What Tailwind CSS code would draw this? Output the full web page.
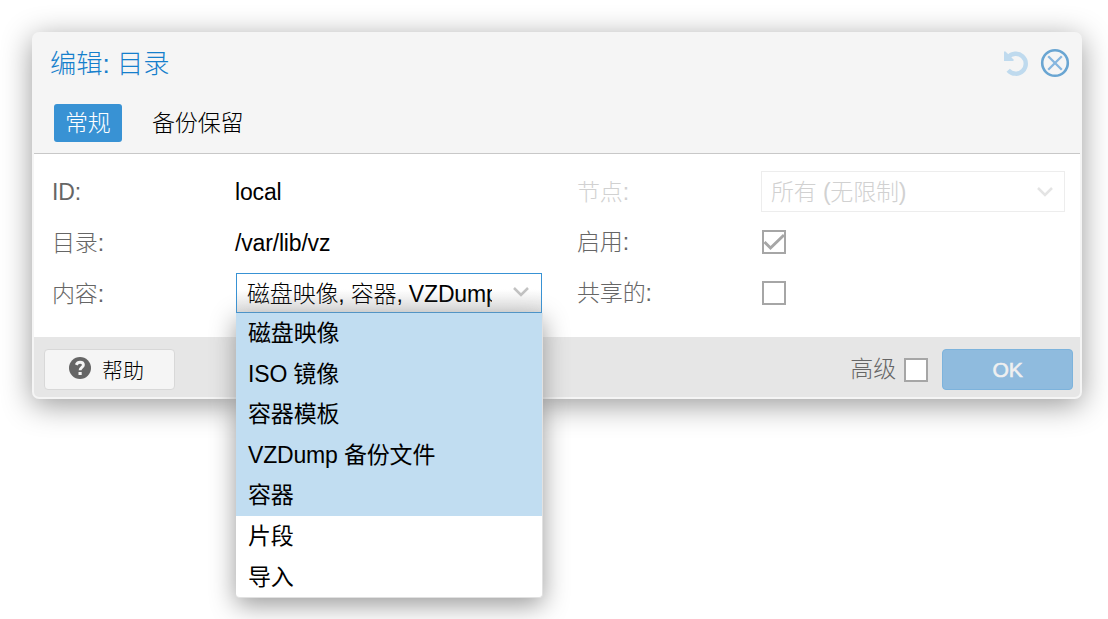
<!DOCTYPE html>
<html lang="zh-CN">
<head>
<meta charset="utf-8">
<title>编辑: 目录</title>
<script src="https://cdn.jsdelivr.net/npm/@tailwindcss/browser@4"></script>
</head>
<body class="h-[619px] overflow-hidden bg-white p-8 font-['Liberation_Sans','Noto_Sans_CJK_SC',sans-serif] text-[23px] font-light leading-[41px] tracking-[-0.17px] text-black">
<div class="flex h-[367px] w-[1050px] flex-col rounded-[7px] border-2 border-[#f5f5f5] bg-[#f5f5f5] shadow-[0_6px_30px_#999]">
  <header class="flex h-[60px] shrink-0 items-center pl-4 pr-[10px] pb-[2px] text-[26.25px] tracking-normal text-[#157fcc]">
    <h1 class="grow pt-[2px]">编辑: 目录</h1>
    <svg class="mr-[10px] h-[28px] w-[28px]" viewBox="0 0 28 28" fill="none">
      <path d="M6 8.4A10 10 0 1 1 6.2 21.2" stroke="#bfdaee" stroke-width="4.4"/>
      <path d="M2 2.5H3.5L11.5 10.5V12H2Z" fill="#bfdaee"/>
    </svg>
    <svg class="h-[30px] w-[30px]" viewBox="0 0 30 30" fill="none">
      <circle cx="15" cy="15" r="12.8" stroke="#69a5d2" stroke-width="2.6"/>
      <path d="M8.2 8.2L21.8 21.8M21.8 8.2L8.2 21.8" stroke="#86b6df" stroke-width="2.3"/>
    </svg>
  </header>
  <nav class="flex h-[60px] shrink-0 items-start gap-[20px] border-b border-[#c8c8c8] pl-5 pt-[10px] leading-[38px]">
    <span class="h-[38px] w-[68px] rounded-[3px] bg-[#3892d4] pl-[11px] text-white">常规</span>
    <span class="pl-[10px]">备份保留</span>
  </nav>
  <main class="grid h-[183px] shrink-0 grid-cols-[524px_1fr] bg-white pl-[18px] pt-[17px]">
    <div class="flex flex-col gap-[11px] leading-[43px] text-[#666]">
      <div class="flex h-10"><span class="w-[183px]">ID:</span><span class="text-black">local</span></div>
      <div class="flex h-10"><span class="w-[183px]">目录:</span><span class="text-black">/var/lib/vz</span></div>
      <div class="flex h-10"><span class="w-[184px]">内容:</span>
        <div class="relative h-10 w-[306px] border border-[#3892d4] bg-white bg-linear-to-b from-white from-40% to-[#e2e2e2] leading-[40px] text-black">
          <div class="ml-[10px] w-[245px] overflow-hidden whitespace-nowrap">磁盘映像, 容器, VZDump</div>
          <svg class="absolute right-[11px] top-[11px] h-[14px] w-[18px]" viewBox="0 0 18 14" fill="none"><path d="M2 3L9 10L16 3" stroke="#c2c2c2" stroke-width="2.5"/></svg>
          <div class="absolute -left-px top-[39px] z-10 h-[285px] w-[307px] rounded-b-[4px] border-r border-b border-[#e1e1e1] bg-white font-normal leading-[40.6px] shadow-[0_7px_26px_#999]">
            <div class="bg-[#c1ddf1] pl-3">磁盘映像</div>
            <div class="bg-[#c1ddf1] pl-3">ISO 镜像</div>
            <div class="bg-[#c1ddf1] pl-3">容器模板</div>
            <div class="bg-[#c1ddf1] pl-3">VZDump 备份文件</div>
            <div class="bg-[#c1ddf1] pl-3">容器</div>
            <div class="pl-3">片段</div>
            <div class="pl-3">导入</div>
          </div>
        </div>
      </div>
    </div>
    <div class="flex flex-col gap-[10px] pl-px text-[#666]">
      <div class="flex h-[41px] leading-[43px] text-[#d1d1d1]"><span class="w-[184px]">节点:</span>
        <div class="flex h-[41px] w-[304px] items-center justify-between border border-[#ededed] pl-[9px] pr-[10px]"><span class="pt-[2px]">所有 (无限制)</span>
          <svg class="h-[14px] w-[18px]" viewBox="0 0 18 14" fill="none"><path d="M2 3L9 10L16 3" stroke="#e4e4e4" stroke-width="2.5"/></svg>
        </div>
      </div>
      <div class="flex h-10 items-center"><span class="w-[185px]">启用:</span>
        <svg class="h-6 w-6" viewBox="0 0 24 24" fill="none"><path d="M1 1H23V23H1Z" stroke="#a6a6a6" stroke-width="2"/><path d="M2.5 12L8.5 18L22 5" stroke="#a6a6a6" stroke-width="3"/></svg>
      </div>
      <div class="flex h-[42px] items-center"><span class="w-[185px]">共享的:</span><span class="h-6 w-6 border-2 border-[#a6a6a6]"></span></div>
    </div>
  </main>
  <footer class="flex grow items-center rounded-b-[5px] bg-[#e6e6e6] pl-[10px] pr-[7px] pt-[5px]">
    <div class="flex h-[41px] w-[131px] items-center rounded-[4px] border border-[#d8d8d8] bg-[#f5f5f5] pl-6 text-[21px] tracking-normal">
      <svg class="mb-[3px] mr-[11px] h-[22px] w-[22px]" viewBox="0 0 22 22" fill="none"><circle cx="11" cy="11" r="11" fill="#666"/><path d="M7.2 7.8C8.1 5.9 9.2 5.2 11 5.2C13 5.2 14.4 6.4 14.4 8C14.4 10.5 11.1 10.5 11.1 13.3" stroke="#f5f5f5" stroke-width="2.9"/><path d="M9.5 15H12.7V18H9.5Z" fill="#f5f5f5"/></svg>
      <span class="pt-[2px]">帮助</span>
    </div>
    <div class="grow"></div>
    <span class="text-[#666]">高级</span>
    <span class="ml-2 mr-[14px] h-6 w-6 border-2 border-[#a6a6a6] bg-white"></span>
    <div class="h-[41px] w-[131px] rounded-[4px] border border-[#7db3dc] bg-[#8fbbde] text-center text-[21px] leading-[39px] text-[#f0f0f0] [-webkit-text-stroke:0.6px_#f0f0f0]">OK</div>
  </footer>
</div>
</body>
</html>
